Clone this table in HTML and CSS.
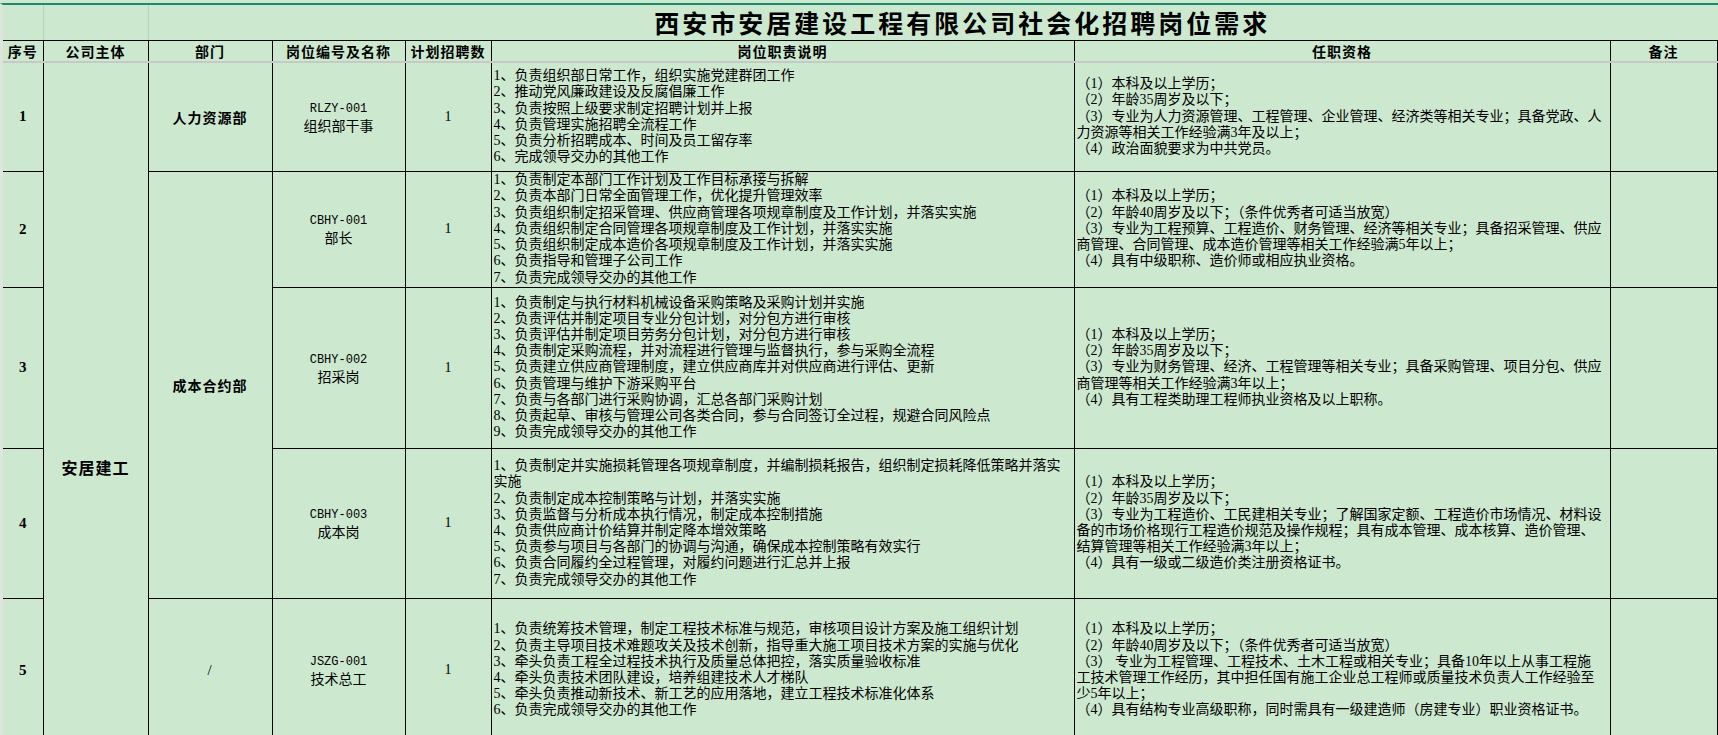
FILE: index.html
```html
<!DOCTYPE html>
<html lang="zh-CN">
<head>
<meta charset="utf-8">
<title>西安市安居建设工程有限公司社会化招聘岗位需求</title>
<link rel="stylesheet" href="styles.css">
</head>
<body>
<div class="sheet">
<table class="grid">
  <colgroup>
    <col class="w-no"><col class="w-co"><col class="w-dept"><col class="w-pos"><col class="w-num"><col class="w-duty"><col class="w-req"><col class="w-note">
  </colgroup>
  <tr class="row-title">
    <td class="tcell"></td>
    <td class="tcell"></td>
    <td class="tcell ttext" colspan="6">西安市安居建设工程有限公司社会化招聘岗位需求</td>
  </tr>
  <tr class="row-head">
    <td class="hd">序号</td>
    <td class="hd">公司主体</td>
    <td class="hd">部门</td>
    <td class="hd">岗位编号及名称</td>
    <td class="hd">计划招聘数</td>
    <td class="hd">岗位职责说明</td>
    <td class="hd">任职资格</td>
    <td class="hd">备注</td>
  </tr>
  <tr class="r1">
    <td class="no">1</td>
    <td class="co" rowspan="5"><span class="co-text">安居建工</span></td>
    <td class="dept">人力资源部</td>
    <td class="pos"><span class="code">RLZY-001</span><br>组织部干事</td>
    <td class="num">1</td>
    <td class="txt">1、负责组织部日常工作，组织实施党建群团工作<br>2、推动党风廉政建设及反腐倡廉工作<br>3、负责按照上级要求制定招聘计划并上报<br>4、负责管理实施招聘全流程工作<br>5、负责分析招聘成本、时间及员工留存率<br>6、完成领导交办的其他工作</td>
    <td class="txt">（1）本科及以上学历；<br>（2）年龄35周岁及以下；<br>（3）专业为人力资源管理、工程管理、企业管理、经济类等相关专业；具备党政、人<br>力资源等相关工作经验满3年及以上；<br>（4）政治面貌要求为中共党员。</td>
    <td class="note"></td>
  </tr>
  <tr class="r2">
    <td class="no">2</td>
    <td class="dept" rowspan="3">成本合约部</td>
    <td class="pos"><span class="code">CBHY-001</span><br>部长</td>
    <td class="num">1</td>
    <td class="txt">1、负责制定本部门工作计划及工作目标承接与拆解<br>2、负责本部门日常全面管理工作，优化提升管理效率<br>3、负责组织制定招采管理、供应商管理各项规章制度及工作计划，并落实实施<br>4、负责组织制定合同管理各项规章制度及工作计划，并落实实施<br>5、负责组织制定成本造价各项规章制度及工作计划，并落实实施<br>6、负责指导和管理子公司工作<br>7、负责完成领导交办的其他工作</td>
    <td class="txt">（1）本科及以上学历；<br>（2）年龄40周岁及以下；（条件优秀者可适当放宽）<br>（3）专业为工程预算、工程造价、财务管理、经济等相关专业；具备招采管理、供应<br>商管理、合同管理、成本造价管理等相关工作经验满5年以上；<br>（4）具有中级职称、造价师或相应执业资格。</td>
    <td class="note"></td>
  </tr>
  <tr class="r3">
    <td class="no">3</td>
    <td class="pos"><span class="code">CBHY-002</span><br>招采岗</td>
    <td class="num">1</td>
    <td class="txt">1、负责制定与执行材料机械设备采购策略及采购计划并实施<br>2、负责评估并制定项目专业分包计划，对分包方进行审核<br>3、负责评估并制定项目劳务分包计划，对分包方进行审核<br>4、负责制定采购流程，并对流程进行管理与监督执行，参与采购全流程<br>5、负责建立供应商管理制度，建立供应商库并对供应商进行评估、更新<br>6、负责管理与维护下游采购平台<br>7、负责与各部门进行采购协调，汇总各部门采购计划<br>8、负责起草、审核与管理公司各类合同，参与合同签订全过程，规避合同风险点<br>9、负责完成领导交办的其他工作</td>
    <td class="txt">（1）本科及以上学历；<br>（2）年龄35周岁及以下；<br>（3）专业为财务管理、经济、工程管理等相关专业；具备采购管理、项目分包、供应<br>商管理等相关工作经验满3年以上；<br>（4）具有工程类助理工程师执业资格及以上职称。</td>
    <td class="note"></td>
  </tr>
  <tr class="r4">
    <td class="no">4</td>
    <td class="pos"><span class="code">CBHY-003</span><br>成本岗</td>
    <td class="num">1</td>
    <td class="txt">1、负责制定并实施损耗管理各项规章制度，并编制损耗报告，组织制定损耗降低策略并落实<br>实施<br>2、负责制定成本控制策略与计划，并落实实施<br>3、负责监督与分析成本执行情况，制定成本控制措施<br>4、负责供应商计价结算并制定降本增效策略<br>5、负责参与项目与各部门的协调与沟通，确保成本控制策略有效实行<br>6、负责合同履约全过程管理，对履约问题进行汇总并上报<br>7、负责完成领导交办的其他工作</td>
    <td class="txt">（1）本科及以上学历；<br>（2）年龄35周岁及以下；<br>（3）专业为工程造价、工民建相关专业；了解国家定额、工程造价市场情况、材料设<br>备的市场价格现行工程造价规范及操作规程；具有成本管理、成本核算、造价管理、<br>结算管理等相关工作经验满3年以上；<br>（4）具有一级或二级造价类注册资格证书。</td>
    <td class="note"></td>
  </tr>
  <tr class="r5">
    <td class="no">5</td>
    <td class="dept dept-plain">/</td>
    <td class="pos"><span class="code">JSZG-001</span><br>技术总工</td>
    <td class="num">1</td>
    <td class="txt">1、负责统筹技术管理，制定工程技术标准与规范，审核项目设计方案及施工组织计划<br>2、负责主导项目技术难题攻关及技术创新，指导重大施工项目技术方案的实施与优化<br>3、牵头负责工程全过程技术执行及质量总体把控，落实质量验收标准<br>4、牵头负责技术团队建设，培养组建技术人才梯队<br>5、牵头负责推动新技术、新工艺的应用落地，建立工程技术标准化体系<br>6、负责完成领导交办的其他工作</td>
    <td class="txt">（1）本科及以上学历；<br>（2）年龄40周岁及以下；（条件优秀者可适当放宽）<br>（3）&nbsp;专业为工程管理、工程技术、土木工程或相关专业；具备10年以上从事工程施<br>工技术管理工作经历，其中担任国有施工企业总工程师或质量技术负责人工作经验至<br>少5年以上；<br>（4）具有结构专业高级职称，同时需具有一级建造师（房建专业）职业资格证书。</td>
    <td class="note"></td>
  </tr>
</table>
</div>
</body>
</html>
```

FILE: styles.css
```css
html, body {
  margin: 0;
  padding: 0;
  overflow: hidden;
  background: #cce8cf;
}

body {
  width: 1718px;
  height: 735px;
}

.sheet {
  margin-top: 3px;
  border-top: 2px solid #1f8a6b;
  border-left: 3px solid #dfe4df;
}

.grid {
  border-collapse: collapse;
  table-layout: fixed;
  width: 1714px;
  font-family: "Liberation Serif", "Noto Sans CJK SC", serif;
  font-size: 14px;
  color: #000;
}

.w-no { width: 40px; }
.w-co { width: 105px; }
.w-dept { width: 124px; }
.w-pos { width: 133px; }
.w-num { width: 86px; }
.w-duty { width: 583px; }
.w-req { width: 536px; }
.w-note { width: 107px; }

.grid td {
  border: 1px solid #000;
  padding: 0;
  vertical-align: middle;
  text-align: center;
}

.grid td:first-child {
  border-left: none;
}

.row-title { height: 35px; }

.grid .tcell {
  border-top: none;
  border-right: 1px solid #b7d4ba;
  border-bottom: 1px solid #000;
}

.grid .ttext {
  border-right: none;
  padding-left: 59px;
  font-family: "Noto Sans CJK SC", sans-serif;
  font-weight: 700;
  font-size: 25px;
  letter-spacing: 3px;
  line-height: 30px;
  white-space: nowrap;
}

.row-head { height: 22px; }

.grid .hd {
  border-bottom: 2px solid #c6c9c6;
  font-family: "Noto Sans CJK SC", sans-serif;
  font-weight: 700;
  font-size: 14px;
  letter-spacing: 1px;
  line-height: 18px;
  white-space: nowrap;
}

.r1 { height: 109px; }
.r2 { height: 116px; }
.r3 { height: 161px; }
.r4 { height: 150px; }
.r5 { height: 144px; }

.no {
  font-family: "Liberation Serif", serif;
  font-weight: 700;
  font-size: 15px;
}

.grid .co {
  vertical-align: top;
  padding-top: 394px;
}

.co-text {
  font-family: "Noto Sans CJK SC", sans-serif;
  font-weight: 700;
  font-size: 16px;
  letter-spacing: 1px;
  line-height: 20px;
}

.dept {
  font-family: "Noto Sans CJK SC", sans-serif;
  font-weight: 700;
  font-size: 14px;
  letter-spacing: 1px;
}

.dept-plain {
  font-family: "Liberation Serif", serif;
  font-weight: 400;
  font-size: 15px;
}

.pos {
  font-size: 14px;
  line-height: 17px;
}

.code {
  font-family: "Liberation Mono", monospace;
  font-size: 12px;
}

.num {
  font-size: 14px;
}

.grid .txt {
  text-align: left;
  padding: 0 2px;
  line-height: 16.2px;
  white-space: nowrap;
}
```
